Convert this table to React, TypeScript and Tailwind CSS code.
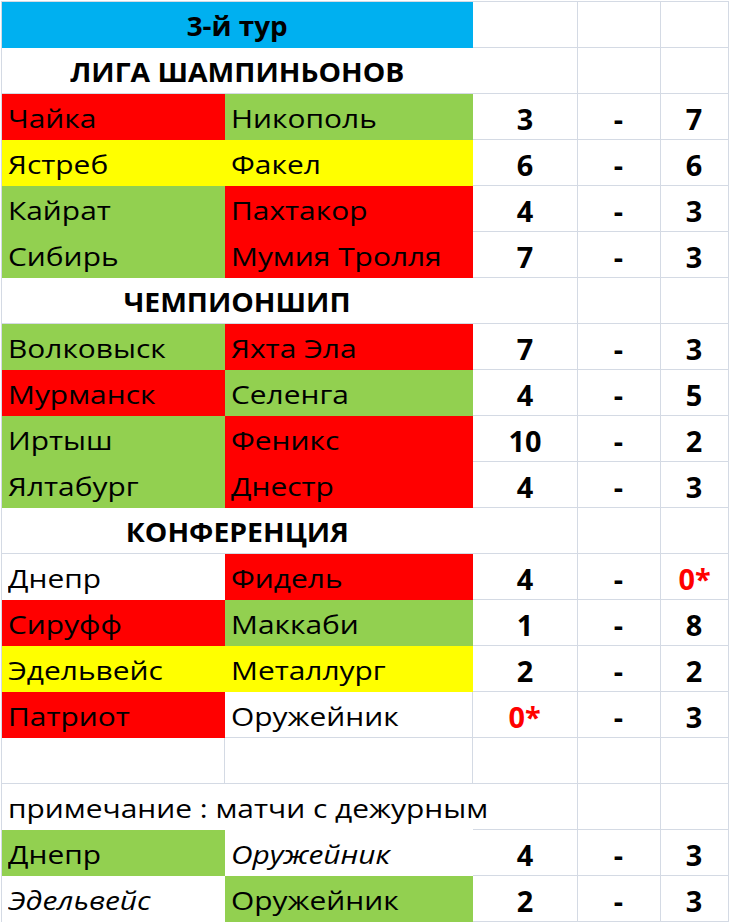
import * as React from "react";

type Fill = "red" | "green" | "yellow" | "white" | "none";

interface Match {
  home: string;
  homeFill: Fill;
  away: string;
  awayFill: Fill;
  a: string;
  b: string;
  homeItalic?: boolean;
  awayItalic?: boolean;
  aRed?: boolean;
  bRed?: boolean;
}

type Row =
  | { kind: "title" }
  | { kind: "heading"; text: string }
  | { kind: "match"; m: Match }
  | { kind: "empty" }
  | { kind: "note"; text: string };

const fillCls: Record<Fill, string> = {
  red: "bg-[#ff0000] border-[#ff0000]",
  green: "bg-[#92d050] border-[#92d050]",
  yellow: "bg-[#ffff00] border-[#ffff00]",
  white: "bg-white border-white",
  none: "border-[#d4dae4]",
};

const rows: Row[] = [
  { kind: "title" },
  { kind: "heading", text: "ЛИГА ШАМПИНЬОНОВ" },
  { kind: "match", m: { home: "Чайка", homeFill: "red", away: "Никополь", awayFill: "green", a: "3", b: "7" } },
  { kind: "match", m: { home: "Ястреб", homeFill: "yellow", away: "Факел", awayFill: "yellow", a: "6", b: "6" } },
  { kind: "match", m: { home: "Кайрат", homeFill: "green", away: "Пахтакор", awayFill: "red", a: "4", b: "3" } },
  { kind: "match", m: { home: "Сибирь", homeFill: "green", away: "Мумия Тролля", awayFill: "red", a: "7", b: "3" } },
  { kind: "heading", text: "ЧЕМПИОНШИП" },
  { kind: "match", m: { home: "Волковыск", homeFill: "green", away: "Яхта Эла", awayFill: "red", a: "7", b: "3" } },
  { kind: "match", m: { home: "Мурманск", homeFill: "red", away: "Селенга", awayFill: "green", a: "4", b: "5" } },
  { kind: "match", m: { home: "Иртыш", homeFill: "green", away: "Феникс", awayFill: "red", a: "10", b: "2" } },
  { kind: "match", m: { home: "Ялтабург", homeFill: "green", away: "Днестр", awayFill: "red", a: "4", b: "3" } },
  { kind: "heading", text: "КОНФЕРЕНЦИЯ" },
  { kind: "match", m: { home: "Днепр", homeFill: "white", away: "Фидель", awayFill: "red", a: "4", b: "0*", bRed: true } },
  { kind: "match", m: { home: "Сируфф", homeFill: "red", away: "Маккаби", awayFill: "green", a: "1", b: "8" } },
  { kind: "match", m: { home: "Эдельвейс", homeFill: "yellow", away: "Металлург", awayFill: "yellow", a: "2", b: "2" } },
  { kind: "match", m: { home: "Патриот", homeFill: "red", away: "Оружейник", awayFill: "none", a: "0*", b: "3", aRed: true } },
  { kind: "empty" },
  { kind: "note", text: "примечание : матчи с дежурным" },
  { kind: "match", m: { home: "Днепр", homeFill: "green", away: "Оружейник", awayFill: "white", a: "4", b: "3", awayItalic: true } },
  { kind: "match", m: { home: "Эдельвейс", homeFill: "white", away: "Оружейник", awayFill: "green", a: "2", b: "3", homeItalic: true } },
];

const cell = "h-[46px] border-r border-b flex items-center pt-[4px] whitespace-nowrap";
const grid = "border-[#d4dae4]";

function Name({ children }: { children: React.ReactNode }) {
  return <span className="inline-block origin-left scale-x-[1.15]">{children}</span>;
}

function Score({ value, red }: { value: string; red?: boolean }) {
  return (
    <div className={`${cell} ${grid} justify-center font-bold text-[28px] ${red ? "text-[#ff0000]" : ""}`}>
      <span className="inline-block scale-x-[1.03]">{value}</span>
    </div>
  );
}

function Blank() {
  return <div className={`${cell} ${grid}`} />;
}

export default function App() {
  return (
    <div className="w-[730px] h-[923px] bg-white overflow-hidden text-black text-[26px]" style={{ fontFamily: '"Open Sans", "Noto Sans", sans-serif' }}>
      <div className="ml-px mt-px w-[728px] border-l border-t border-[#d4dae4] grid grid-cols-[223px_248px_105px_83px_68px]">
        {rows.map((r, i) => {
          if (r.kind === "title") {
            return (
              <React.Fragment key={i}>
                <div className={`${cell} col-span-2 justify-center font-bold bg-[#00b0f0] border-[#00b0f0]`}>
                  <span className="inline-block scale-x-[1.07]">3-й тур</span>
                </div>
                <Blank />
                <Blank />
                <Blank />
              </React.Fragment>
            );
          }
          if (r.kind === "heading") {
            return (
              <React.Fragment key={i}>
                <div className={`${cell} ${grid} col-span-3 font-bold`}>
                  <span className="w-[471px] text-center">
                    <span className="inline-block scale-x-[1.09]">{r.text}</span>
                  </span>
                </div>
                <Blank />
                <Blank />
              </React.Fragment>
            );
          }
          if (r.kind === "empty") {
            return (
              <React.Fragment key={i}>
                <Blank />
                <Blank />
                <Blank />
                <Blank />
                <Blank />
              </React.Fragment>
            );
          }
          if (r.kind === "note") {
            return (
              <React.Fragment key={i}>
                <div className={`${cell} col-span-2 pl-[6px] border-transparent`}>
                  <Name>{r.text}</Name>
                </div>
                <Blank />
                <Blank />
                <Blank />
              </React.Fragment>
            );
          }
          const m = r.m;
          return (
            <React.Fragment key={i}>
              <div className={`${cell} pl-[6px] ${fillCls[m.homeFill]} ${m.homeItalic ? "italic" : ""}`}>
                <Name>{m.home}</Name>
              </div>
              <div className={`${cell} pl-[6px] ${fillCls[m.awayFill]} ${m.awayItalic ? "italic" : ""}`}>
                <Name>{m.away}</Name>
              </div>
              <Score value={m.a} red={m.aRed} />
              <Score value="-" />
              <Score value={m.b} red={m.bRed} />
            </React.Fragment>
          );
        })}
      </div>
    </div>
  );
}
